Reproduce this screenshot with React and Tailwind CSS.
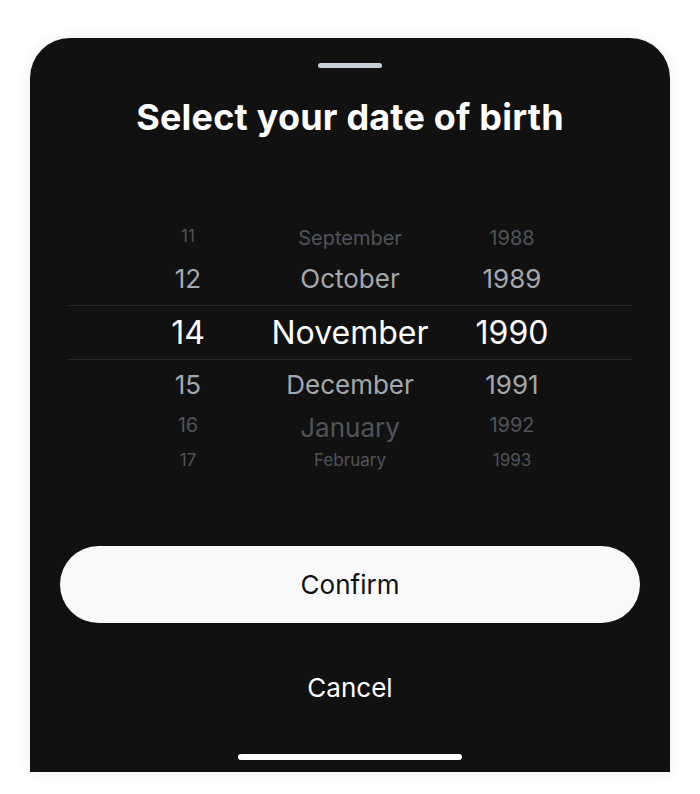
import React from "react";

const rows = [
  { day: "11", month: "September", year: "1988", h: "h-[30px]", day_cls: "text-[17px] text-[#50535a]", month_cls: "text-[20px] text-[#50535a]", year_cls: "text-[20px] text-[#50535a]" },
  { day: "12", month: "October", year: "1989", h: "h-[52px]", day_cls: "text-[26px] text-[#a3a7ae]", month_cls: "text-[26px] text-[#a3a7ae]", year_cls: "text-[26px] text-[#a3a7ae]" },
  { day: "14", month: "November", year: "1990", h: "h-[55px] border-y border-[#26272a]", day_cls: "text-[32px] text-white", month_cls: "text-[32px] text-white", year_cls: "text-[32px] text-white" },
  { day: "15", month: "December", year: "1991", h: "h-[50px]", day_cls: "text-[26px] text-[#a3a7ae]", month_cls: "text-[26px] text-[#a3a7ae]", year_cls: "text-[26px] text-[#a3a7ae]" },
  { day: "16", month: "January", year: "1992", h: "h-[36px]", day_cls: "text-[20px] text-[#50535a]", month_cls: "text-[26px] text-[#50535a]", year_cls: "text-[20px] text-[#50535a]" },
  { day: "17", month: "February", year: "1993", h: "h-[28px]", day_cls: "text-[17px] text-[#50535a]", month_cls: "text-[17px] text-[#50535a]", year_cls: "text-[17px] text-[#50535a]" },
];

const App = () => {
  return (
    <div className="min-h-[794px] bg-white pt-[38px] px-[30px] font-['Inter',sans-serif]">
      <div className="h-[734px] bg-[#111111] rounded-t-[40px] shadow-[0_0_14px_rgba(0,0,0,0.08)] flex flex-col items-center">
        <div className="mt-[25px] w-[64px] h-[5px] rounded-full bg-[#c9cfda]" />
        <h1 className="mt-[29px] text-[36px] leading-[40px] font-bold tracking-[0.2px] text-white">
          Select your date of birth
        </h1>

        {/* Picker */}
        <div className="mt-[86px] w-full">
          {rows.map((r) => (
            <div key={r.day} className={`mx-[38px] flex items-center justify-center ${r.h}`}>
              <div className="grid grid-cols-[162px_162px_162px] text-center leading-none">
                <span className={r.day_cls}>{r.day}</span>
                <span className={r.month_cls}>{r.month}</span>
                <span className={r.year_cls}>{r.year}</span>
              </div>
            </div>
          ))}
        </div>

        <button className="mt-[72px] w-[580px] h-[77px] rounded-full bg-[#f8f9fb] text-[26px] text-[#111111]">
          Confirm
        </button>
        <button className="mt-[45px] text-[26px] text-white">Cancel</button>
        <div className="mt-auto mb-[12px] w-[224px] h-[6px] rounded-full bg-white" />
      </div>
    </div>
  );
};

export default App;
